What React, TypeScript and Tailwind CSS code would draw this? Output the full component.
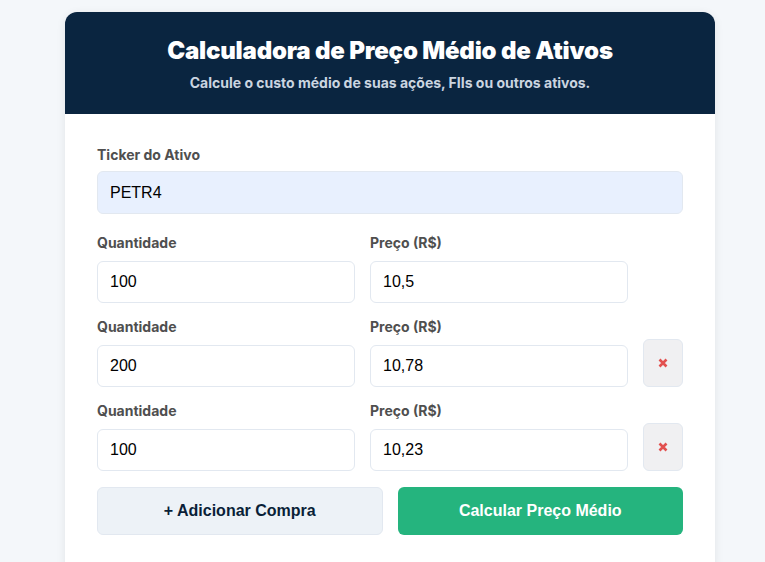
import React from "react";

const inter = { fontFamily: "Inter, 'Noto Sans', sans-serif" };
const arial = { fontFamily: "'Liberation Sans', Arial, sans-serif" };

function Field({ label, value }: { label: string; value: string }) {
  return (
    <div className="flex flex-col">
      <label className="text-[14px] leading-[20px] font-bold text-[#4f4f4f] mb-[8px]" style={inter}>
        {label}
      </label>
      <input
        readOnly
        value={value}
        className="h-[42px] w-full rounded-[6px] border border-[#e2e8f0] bg-white px-[12px] text-[16px] text-black outline-none"
        style={arial}
      />
    </div>
  );
}

export default function App() {
  const rows = [
    { q: "100", p: "10,5", rm: false },
    { q: "200", p: "10,78", rm: true },
    { q: "100", p: "10,23", rm: true },
  ];
  return (
    <div className="min-h-[562px] bg-[#f4f7fa] pl-[65px] pt-[12px]" style={inter}>
      <div className="w-[650px] rounded-[12px] bg-white shadow-[0_2px_10px_rgba(0,0,0,0.08)] overflow-hidden">
        <div className="bg-[#0a2540] h-[102px] flex flex-col items-center pt-[23px]">
          <h1 className="text-[24px] leading-[32px] font-black tracking-[-0.2px] text-white">
            Calculadora de Preço Médio de Ativos
          </h1>
          <p className="text-[14px] leading-[20px] font-bold text-[#cbd5e0] mt-[6px]">
            Calcule o custo médio de suas ações, FIIs ou outros ativos.
          </p>
        </div>
        <div className="px-[32px] pt-[31px] pb-[40px]">
          <div className="flex flex-col">
            <label className="text-[14px] leading-[20px] font-bold text-[#4f4f4f] mb-[6px]">Ticker do Ativo</label>
            <input
              readOnly
              value="PETR4"
              className="h-[43px] w-full rounded-[6px] border border-[#e2e8f0] bg-[#e8f0fe] px-[12px] text-[16px] text-black outline-none"
              style={arial}
            />
          </div>
          <div className="mt-[19px] flex flex-col gap-[14px]">
            {rows.map((r, i) => (
              <div key={i} className="grid grid-cols-[1fr_1fr_40px] gap-[15px] items-end">
                <Field label="Quantidade" value={r.q} />
                <Field label="Preço (R$)" value={r.p} />
                {r.rm ? (
                  <button className="h-[48px] w-[40px] rounded-[6px] border border-[#e2e8f0] bg-[#f0f0f2] flex items-center justify-center">
                    <svg width="10" height="10" viewBox="0 0 10 10">
                      <path d="M1.5 1.5 L8.5 8.5 M8.5 1.5 L1.5 8.5" stroke="#e2504f" strokeWidth="2.6" strokeLinecap="butt" />
                    </svg>
                  </button>
                ) : (
                  <div />
                )}
              </div>
            ))}
          </div>
          <div className="mt-[16px] grid grid-cols-2 gap-[15px]">
            <button
              className="h-[48px] rounded-[6px] border border-[#e2e8f0] bg-[#edf2f7] text-[16px] font-bold text-[#0a1f38]"
              style={arial}
            >
              + Adicionar Compra
            </button>
            <button className="h-[48px] rounded-[6px] bg-[#25b47e] text-[16px] font-bold text-white" style={arial}>
              Calcular Preço Médio
            </button>
          </div>
        </div>
      </div>
    </div>
  );
}
